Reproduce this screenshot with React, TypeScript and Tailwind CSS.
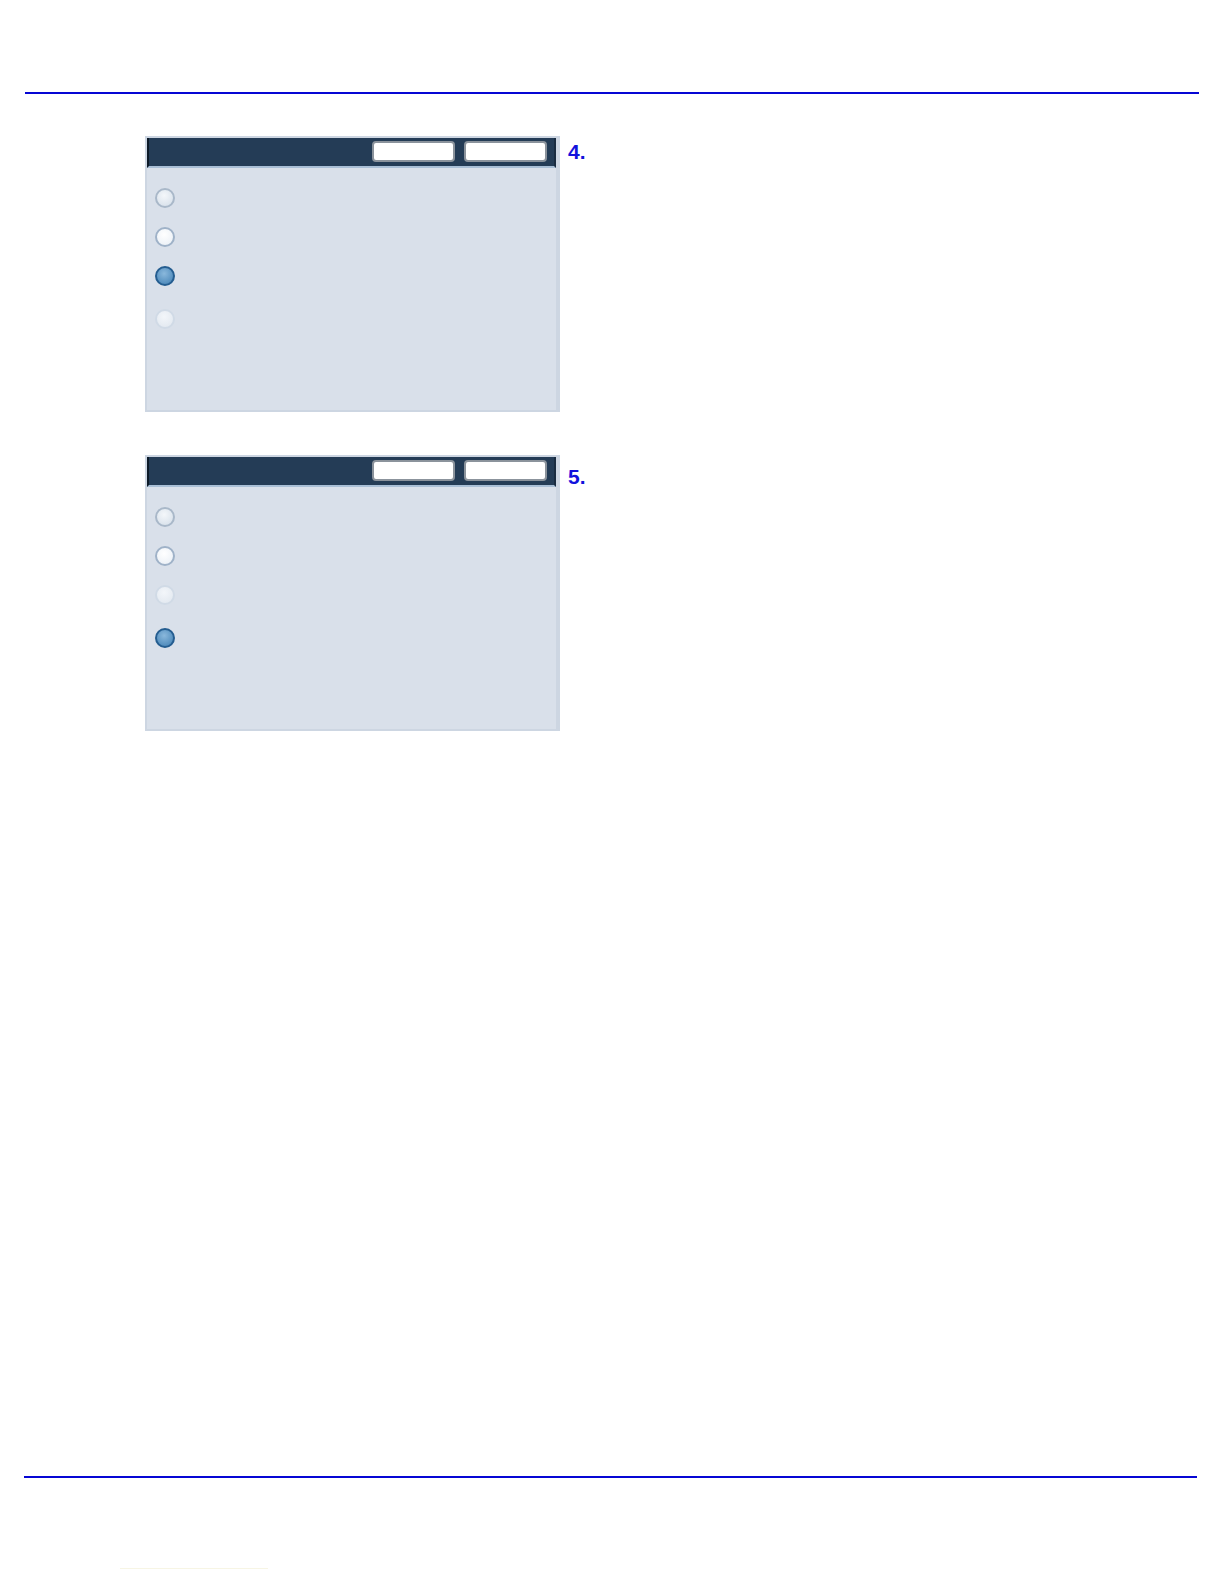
import * as React from "react";

type RadioKind = "normal" | "white" | "faded" | "selected";

function Radio({ kind }: { kind: RadioKind }) {
    const styles: Record<RadioKind, string> = {
        normal: "border-[#a9b8c9] bg-[radial-gradient(circle_at_45%_35%,#f4f7fa,#d3dde8)]",
        white: "border-[#9fb2c8] bg-[radial-gradient(circle_at_45%_35%,#ffffff,#e8eef5)]",
        faded: "border-[#d0dae6] bg-[radial-gradient(circle_at_45%_35%,#f3f6fa,#dfe6ee)]",
        selected: "border-[#245d90] bg-[radial-gradient(circle_at_45%_35%,#8ab8dc,#3f7fb3)]",
    };
    return <div className={`w-5 h-5 rounded-full border-2 ${styles[kind]}`} />;
}

function HeaderButton() {
    return <div className="w-[83px] h-[21px] rounded-[4px] bg-white border-2 border-[#8b939c]" />;
}

function Panel({ radios, gaps }: { radios: RadioKind[]; gaps: string[] }) {
    return (
        <div className="w-[415px] h-[276px] bg-[#d9e0ea] border-2 border-r-4 border-[#cdd6e2] flex flex-col">
            <div className="h-[30px] shrink-0 bg-[#243c56] border-l-2 border-l-[#0d1a28] border-r-2 border-r-[#1a2c40] border-b-2 border-b-[#a9bfd6] flex items-center justify-end gap-[9px] pr-[7px] pb-[1px]">
                <HeaderButton />
                <HeaderButton />
            </div>
            <div className="flex flex-col pl-[8px] pt-[20px]">
                {radios.map((r, i) => (
                    <div key={i} className={gaps[i]}>
                        <Radio kind={r} />
                    </div>
                ))}
            </div>
        </div>
    );
}

function Step({
    label,
    labelTop,
    radios,
    gaps,
}: {
    label: string;
    labelTop: string;
    radios: RadioKind[];
    gaps: string[];
}) {
    return (
        <div className="flex ml-[145px]">
            <Panel radios={radios} gaps={gaps} />
            <div
                className={`ml-[8px] ${labelTop} text-[21px] font-bold text-[#1212dc] leading-none`}
                style={{ fontFamily: '"Liberation Sans", Arial, sans-serif' }}
            >
                {label}
            </div>
        </div>
    );
}

export default function App() {
    return (
        <div className="w-[1224px] h-[1584px] overflow-hidden bg-white flex flex-col">
            <div className="h-[92px] shrink-0" />
            <div className="ml-[25px] w-[1174px] h-[2px] shrink-0 bg-[#0606d4]" />

            <div className="mt-[42px]">
                <Step
                    label="4."
                    labelTop="mt-[5px]"
                    radios={["normal", "white", "selected", "faded"]}
                    gaps={["", "mt-[19px]", "mt-[19px]", "mt-[23px]"]}
                />
            </div>

            <div className="mt-[43px]">
                <Step
                    label="5."
                    labelTop="mt-[11px]"
                    radios={["normal", "white", "faded", "selected"]}
                    gaps={["", "mt-[19px]", "mt-[19px]", "mt-[23px]"]}
                />
            </div>

            <div className="mt-[745px] ml-[24px] w-[1173px] h-[2px] shrink-0 bg-[#0606d4]" />
            <div className="mt-[90px] ml-[120px] w-[148px] h-px shrink-0 bg-[#f7f5e4]" />
        </div>
    );
}
